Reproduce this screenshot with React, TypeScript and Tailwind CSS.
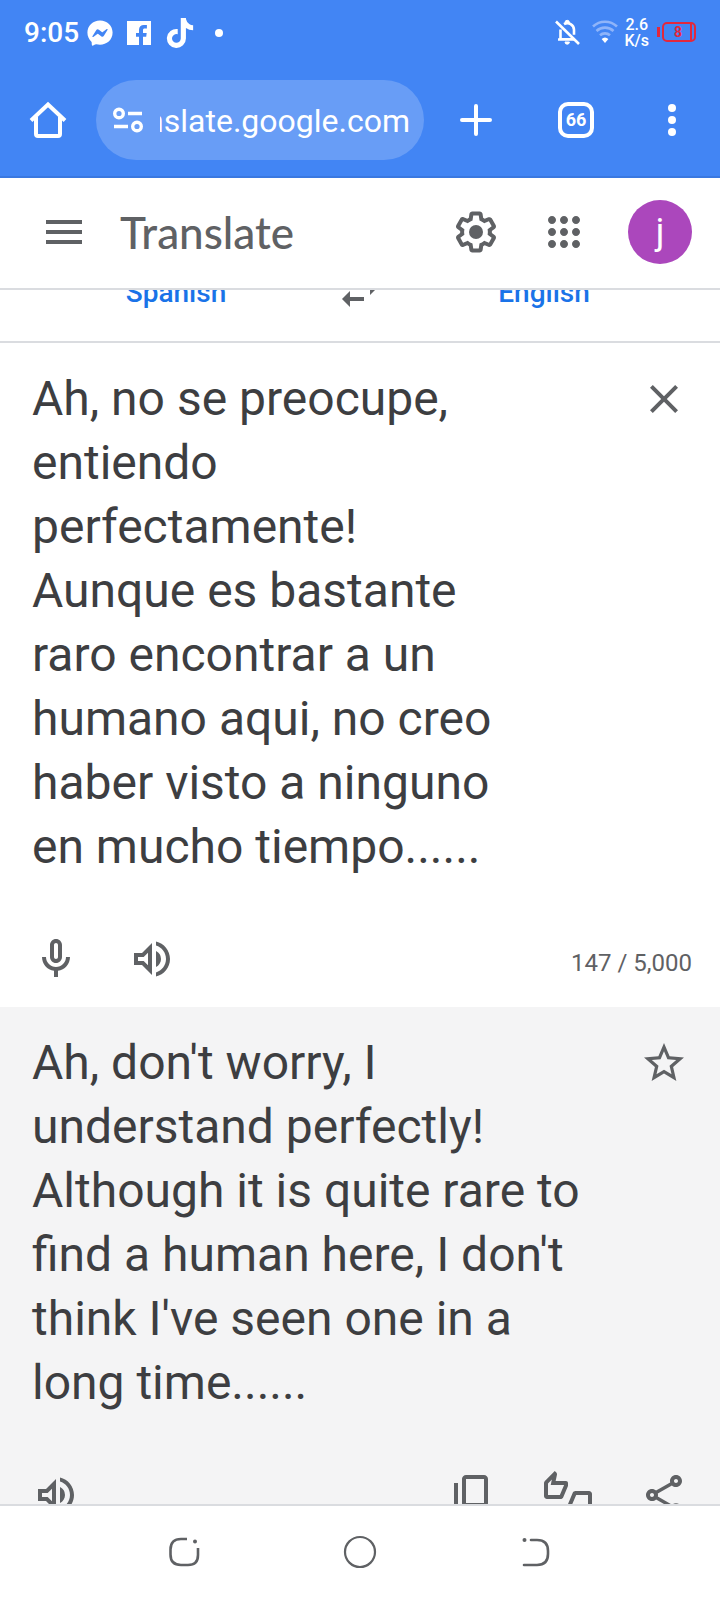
import React, { useState } from "react"
import { FaFacebookMessenger, FaTiktok } from "react-icons/fa6"

type IconProps = {
    d: string
    children?: React.ReactNode
}

type IconButtonProps = IconProps & {
    label: string
}

const PATHS = {
    menu: "M3 18h18v-2H3v2zm0-5h18v-2H3v2zm0-7v2h18V6H3z",
    settings:
        "M13.85 22.25h-3.7c-.74 0-1.36-.54-1.45-1.27l-.27-1.89c-.27-.14-.53-.29-.79-.46l-1.8.72c-.7.26-1.47-.03-1.81-.65L2.2 15.53c-.35-.66-.2-1.44.36-1.88l1.53-1.19c-.01-.15-.02-.3-.02-.46 0-.15.01-.31.02-.46l-1.52-1.19c-.59-.45-.74-1.26-.37-1.88l1.85-3.19c.34-.62 1.11-.9 1.79-.63l1.81.73c.26-.17.52-.32.78-.46l.27-1.91c.09-.7.71-1.25 1.44-1.25h3.7c.74 0 1.36.54 1.45 1.27l.27 1.89c.27.14.53.29.79.46l1.8-.72c.71-.26 1.48.03 1.82.65l1.84 3.18c.36.66.2 1.44-.36 1.88l-1.52 1.19c.01.15.02.3.02.46s-.01.31-.02.46l1.52 1.19c.56.45.72 1.23.37 1.86l-1.86 3.22c-.34.62-1.11.9-1.8.63l-1.8-.72c-.26.17-.52.32-.78.46l-.27 1.91c-.1.68-.72 1.22-1.46 1.22zm-3.23-2h2.76l.37-2.55.53-.22c.44-.18.88-.44 1.34-.78l.45-.34 2.38.96 1.38-2.4-2.03-1.58.07-.56c.03-.26.06-.51.06-.78s-.03-.53-.06-.78l-.07-.56 2.03-1.58-1.39-2.4-2.39.96-.45-.35c-.42-.32-.87-.58-1.33-.77l-.52-.22-.37-2.55h-2.76l-.37 2.55-.53.21c-.44.19-.88.44-1.34.79l-.45.33-2.38-.95-1.39 2.39 2.03 1.58-.07.56a7 7 0 0 0-.06.79c0 .26.02.53.06.78l.07.56-2.03 1.58 1.38 2.4 2.39-.96.45.35c.43.33.86.58 1.33.77l.53.22.38 2.55z",
    apps: "M6 8c1.1 0 2-.9 2-2s-.9-2-2-2-2 .9-2 2 .9 2 2 2zm6 12c1.1 0 2-.9 2-2s-.9-2-2-2-2 .9-2 2 .9 2 2 2zm-6 0c1.1 0 2-.9 2-2s-.9-2-2-2-2 .9-2 2 .9 2 2 2zm0-6c1.1 0 2-.9 2-2s-.9-2-2-2-2 .9-2 2 .9 2 2 2zm6 0c1.1 0 2-.9 2-2s-.9-2-2-2-2 .9-2 2 .9 2 2 2zm4-8c0 1.1.9 2 2 2s2-.9 2-2-.9-2-2-2-2 .9-2 2zm-4 2c1.1 0 2-.9 2-2s-.9-2-2-2-2 .9-2 2 .9 2 2 2zm6 6c1.1 0 2-.9 2-2s-.9-2-2-2-2 .9-2 2 .9 2 2 2zm0 6c1.1 0 2-.9 2-2s-.9-2-2-2-2 .9-2 2 .9 2 2 2z",
    swap: "M6.99 11L3 15l3.99 4v-3H14v-2H6.99v-3zM21 9l-3.99-4v3H10v2h7.01v3L21 9z",
    close: "M19 6.41L17.59 5 12 10.59 6.41 5 5 6.41 10.59 12 5 17.59 6.41 19 12 13.41 17.59 19 19 17.59 13.41 12 19 6.41z",
    mic: "M12 14c1.66 0 3-1.34 3-3V5c0-1.66-1.34-3-3-3S9 3.34 9 5v6c0 1.66 1.34 3 3 3zm-1-9c0-.55.45-1 1-1s1 .45 1 1v6c0 .55-.45 1-1 1s-1-.45-1-1V5zm6 6c0 2.76-2.24 5-5 5s-5-2.24-5-5H5c0 3.53 2.61 6.43 6 6.92V21h2v-3.08c3.39-.49 6-3.39 6-6.92h-2z",
    volume: "M3 9v6h4l5 5V4L7 9H3zm7-.17v6.34L7.83 13H5v-2h2.83L10 8.83zM16.5 12A4.5 4.5 0 0 0 14 7.97v8.05c1.48-.73 2.5-2.25 2.5-4.02zM14 3.23v2.06c2.89.86 5 3.54 5 6.71s-2.11 5.85-5 6.71v2.06c4.01-.91 7-4.49 7-8.77s-2.99-7.86-7-8.77z",
    star: "M22 9.24l-7.19-.62L12 2 9.19 8.63 2 9.24l5.46 4.73L5.82 21 12 17.27 18.18 21l-1.63-7.03L22 9.24zM12 15.4l-3.76 2.27 1-4.28-3.32-2.88 4.38-.38L12 6.1l1.71 4.04 4.38.38-3.32 2.88 1 4.28L12 15.4z",
    copy: "M9 18q-.825 0-1.412-.587T7 16V4q0-.825.588-1.412T9 2h9q.825 0 1.413.588T20 4v12q0 .825-.587 1.413T18 18zm0-2h9V4H9zm-4 6q-.825 0-1.412-.587T3 20V6h2v14h11v2z",
    rate: "M12 6c0-.55-.45-1-1-1H5.82l.66-3.18.02-.23c0-.31-.13-.59-.33-.8L5.38 0 .44 4.94C.17 5.21 0 5.59 0 6v6.5c0 .83.67 1.5 1.5 1.5h6.75c.62 0 1.15-.38 1.38-.91l2.26-5.29c.07-.17.11-.36.11-.55V6zm-2 1.13L7.92 12H2V6.21l1.93-1.93L3.36 7H10v.13zM22.5 10h-6.75c-.62 0-1.15.38-1.38.91l-2.26 5.29c-.07.17-.11.36-.11.55V18c0 .55.45 1 1 1h5.18l-.66 3.18-.02.24c0 .31.13.59.33.8l.79.78 4.94-4.94c.27-.27.44-.65.44-1.06v-6.5c0-.83-.67-1.5-1.5-1.5zm-.5 7.79l-1.93 1.93.57-2.72H14v-.13L16.08 12H22v5.79z",
    share: "M18 16.08c-.76 0-1.44.3-1.96.77L8.91 12.7c.05-.23.09-.46.09-.7s-.04-.47-.09-.7l7.05-4.11c.54.5 1.25.81 2.04.81 1.66 0 3-1.34 3-3s-1.34-3-3-3-3 1.34-3 3c0 .24.04.47.09.7L8.04 9.81C7.5 9.31 6.79 9 6 9c-1.66 0-3 1.34-3 3s1.34 3 3 3c.79 0 1.5-.31 2.04-.81l7.12 4.16c-.05.21-.08.43-.08.65 0 1.61 1.31 2.92 2.92 2.92s2.92-1.31 2.92-2.92-1.31-2.92-2.92-2.92zM18 4c.55 0 1 .45 1 1s-.45 1-1 1-1-.45-1-1 .45-1 1-1zM6 13c-.55 0-1-.45-1-1s.45-1 1-1 1 .45 1 1-.45 1-1 1zm12 7.02c-.55 0-1-.45-1-1s.45-1 1-1 1 .45 1 1-.45 1-1 1z",
}

const SOURCE_TEXT =
    "Ah, no se preocupe, entiendo perfectamente!\nAunque es bastante raro encontrar a un humano aqui, no creo haber visto a ninguno en mucho tiempo......"
const RESULT_TEXT =
    "Ah, don't worry, I understand perfectly! Although it is quite rare to find a human here, I don't think I've seen one in a long time......"

const Icon: React.FC<IconProps> = ({ d, children }) => (
    <svg viewBox="0 0 24 24" className="size-12 shrink-0" fill="currentColor" aria-hidden="true">
        <path d={d} />
        {children}
    </svg>
)

const IconButton: React.FC<IconButtonProps> = ({ label, d, children }) => (
    <button type="button" aria-label={label} className="shrink-0 text-[#5f6164]">
        <Icon d={d}>{children}</Icon>
    </button>
)

const StatusBar: React.FC = () => (
    <div className="flex h-16 items-center justify-between pr-6 pl-6 text-white">
        <div className="flex items-center pt-0.5">
            <span className="text-[28px] font-medium">9:05</span>
            <FaFacebookMessenger className="ml-2 size-[26px]" />
            <svg viewBox="0 0 24 24" className="ml-3.5 size-6" aria-hidden="true">
                <path
                    fill="currentColor"
                    fillRule="evenodd"
                    d="M0 0h24v24h-8v-8.2h3.2l.5-3.8H16V9.2c0-1.2.4-1.8 1.9-1.8h2V4.1a22 22 0 0 0-3-.2c-3 0-4.9 1.7-4.9 4.9V12H9v3.8h3V24H0z"
                />
            </svg>
            <FaTiktok className="ml-3.5 size-[30px]" />
            <span className="ml-5 size-2 rounded-full bg-white" />
        </div>
        <div className="flex items-center">
            <svg viewBox="0 0 26 28" className="h-7 w-[26px]" fill="none" stroke="currentColor" strokeWidth="2.6" aria-hidden="true">
                <path d="M2 3.5L25 26" />
                <path d="M10 6.2a6.6 6.6 0 0 1 10 5.6v5M6.5 11.5v9.8h13M4 21.5h16" />
                <path d="M11 4.5a2.2 2.2 0 0 1 4.4 0zM11 24h4.4a2.2 2.2 0 0 1-4.4 0z" fill="currentColor" strokeWidth="1" />
            </svg>
            <svg viewBox="0 0 26 24" className="ml-3 h-6 w-[26px]" fill="none" stroke="#8fb4f9" strokeWidth="2.6" aria-hidden="true">
                <path d="M1 6.5a17.5 17.5 0 0 1 24 0" />
                <path d="M4.5 11a12.5 12.5 0 0 1 17 0" />
                <path d="M8 15.3a7.5 7.5 0 0 1 10 0" />
                <path d="M13 23l-3.4-4a5 5 0 0 1 6.8 0z" fill="#fff" stroke="none" />
            </svg>
            <div className="ml-1.5 pt-0.5 text-center text-base leading-4 font-medium">
                <div>2.6</div>
                <div>K/s</div>
            </div>
            <div className="ml-2 flex items-center">
                <span className="h-2.5 w-[3px] bg-[#e3283c]" />
                <span className="ml-0.5 flex h-5 w-[34px] items-center justify-end rounded-[5px] border-2 border-[#e3283c]">
                    <span className="mr-2 text-sm leading-4 font-bold text-[#e3283c]">8</span>
                    <span className="mr-0.5 h-full w-0.5 bg-[#e3283c]" />
                </span>
            </div>
        </div>
    </div>
)

const BrowserBar: React.FC = () => (
    <div className="flex h-28 items-center text-white">
        <button type="button" aria-label="Home" className="flex w-24 justify-center">
            <svg viewBox="0 0 40 40" className="size-10" fill="none" stroke="currentColor" strokeWidth="4" aria-hidden="true">
                <path d="M3 20.5L20 4.5l17 16" />
                <path d="M8 17v17q0 2 2 2h20q2 0 2-2V17" />
            </svg>
        </button>
        <div className="flex h-20 min-w-0 flex-1 items-center gap-4 rounded-full bg-[#689df6] pr-3.5 pl-4">
            <svg viewBox="0 0 32 28" className="h-7 w-8 shrink-0" fill="none" stroke="currentColor" strokeWidth="3.4" aria-hidden="true">
                <circle cx="7" cy="7.5" r="4.3" />
                <path d="M16 7.5h14M2 20.5h14" />
                <circle cx="25" cy="20.5" r="4.3" />
            </svg>
            {/* rtl keeps the end of the host name in view */}
            <input
                type="text"
                dir="rtl"
                aria-label="Address"
                defaultValue="translate.google.com"
                className="w-full min-w-0 flex-1 bg-transparent pt-0.5 text-[32px] leading-10 outline-none"
            />
        </div>
        <button type="button" aria-label="New tab" className="flex w-26 justify-center">
            <svg viewBox="0 0 32 32" className="size-8" stroke="currentColor" strokeWidth="4" strokeLinecap="round" aria-hidden="true">
                <path d="M16 2v28M2 16h28" />
            </svg>
        </button>
        <button type="button" aria-label="Tabs" className="flex w-24 justify-center">
            <span className="flex size-9 items-center justify-center rounded-[10px] border-4 border-white text-lg font-bold">66</span>
        </button>
        <button type="button" aria-label="More options" className="flex w-24 flex-col items-center gap-1">
            <span className="size-2 rounded-full bg-white" />
            <span className="size-2 rounded-full bg-white" />
            <span className="size-2 rounded-full bg-white" />
        </button>
    </div>
)

const PageHeader: React.FC = () => (
    <header className="flex h-28 shrink-0 items-center border-b-2 border-[#dadce0] bg-white pr-7 pb-0.5 pl-10">
        <IconButton label="Main menu" d={PATHS.menu} />
        <h1 className="ml-8 flex-1 font-[Lato,Roboto,sans-serif] text-[44px] leading-none font-medium text-[#5f6164]">Translate</h1>
        <div className="flex items-center gap-10">
            <IconButton label="Settings" d={PATHS.settings}>
                <circle cx="12" cy="12" r="3.5" />
            </IconButton>
            <IconButton label="Google apps" d={PATHS.apps} />
            <button type="button" aria-label="Account" className="size-16 rounded-full bg-[#ab47bc] text-4xl text-white">
                j
            </button>
        </div>
    </header>
)

/* scrolled halfway under the page header */
const LanguageBar: React.FC = () => (
    <div className="flex h-[53px] shrink-0 items-end overflow-hidden border-b-2 border-[#dadce0]">
        <div className="flex h-24 flex-1 shrink-0 items-center text-[28px] font-medium text-[#1a73e8]">
            <button type="button" className="flex-1">
                Spanish
            </button>
            <button type="button" aria-label="Swap languages" className="flex w-4 justify-center text-[#5f6164]">
                <Icon d={PATHS.swap} />
            </button>
            <button type="button" className="flex-1">
                English
            </button>
        </div>
    </div>
)

const SourcePanel: React.FC = () => {
    const [text, setText] = useState(SOURCE_TEXT)
    return (
        <section className="shrink-0 pt-6 pb-6">
            <div className="flex items-start justify-between pr-8 pl-8">
                <textarea
                    aria-label="Source text"
                    rows={8}
                    spellCheck={false}
                    value={text}
                    onChange={(e) => setText(e.target.value)}
                    className="block min-w-0 flex-1 resize-none overflow-hidden pr-24 text-5xl leading-16 text-[#3d3e41] outline-none"
                />
                <div className="flex h-16 items-center">
                    <button type="button" aria-label="Clear source text" onClick={() => setText("")} className="text-[#5f6164]">
                        <Icon d={PATHS.close} />
                    </button>
                </div>
            </div>
            <div className="mt-14 flex items-center gap-12 pr-7 pl-8">
                <IconButton label="Translate by voice" d={PATHS.mic} />
                <IconButton label="Listen to source text" d={PATHS.volume} />
                <span className="flex-1 pt-2 text-right text-2xl text-[#5f6164]">147 / 5,000</span>
            </div>
        </section>
    )
}

const ResultPanel: React.FC = () => (
    <section className="shrink-0 bg-[#f4f4f5] pt-6 pb-6">
        <div className="flex items-start justify-between pr-8 pl-8">
            <p className="min-w-0 flex-1 pr-8 text-5xl leading-16 text-[#3d3e41]">{RESULT_TEXT}</p>
            <div className="flex h-16 items-center">
                <IconButton label="Save translation" d={PATHS.star} />
            </div>
        </div>
        <div className="mt-14 flex items-center gap-12 pr-8 pl-8">
            <IconButton label="Listen to translation" d={PATHS.volume} />
            <div className="flex flex-1 justify-end gap-12">
                <IconButton label="Copy translation" d={PATHS.copy} />
                <IconButton label="Rate translation" d={PATHS.rate} />
                <IconButton label="Share translation" d={PATHS.share} />
            </div>
        </div>
    </section>
)

const NavigationBar: React.FC = () => (
    <nav className="flex h-24 shrink-0 items-center justify-center gap-34 border-t-2 border-[#dadce0] bg-white pb-0.5 text-[#5f6164]">
        <button type="button" aria-label="Recent apps">
            <svg viewBox="0 0 40 40" className="size-10" fill="none" stroke="currentColor" strokeWidth="2.6" aria-hidden="true">
                <path d="M23 7h-6Q6.500 7 6.500 17.500v5Q6.500 33 17 33h7q10 0 10-10v-7" />
                <circle cx="31" cy="9.5" r="2" fill="currentColor" stroke="none" />
            </svg>
        </button>
        <button type="button" aria-label="Home screen">
            <svg viewBox="0 0 40 40" className="size-10" fill="none" stroke="currentColor" strokeWidth="2.2" aria-hidden="true">
                <circle cx="20" cy="20" r="15" />
            </svg>
        </button>
        <button type="button" aria-label="Back">
            <svg viewBox="0 0 40 40" className="size-10" fill="none" stroke="currentColor" strokeWidth="2.6" strokeLinecap="round" aria-hidden="true">
                <path d="M15 8h6q11 0 11 11v3q0 11-11 11H8" />
                <circle cx="8.5" cy="8" r="2" fill="currentColor" stroke="none" />
            </svg>
        </button>
    </nav>
)

const App: React.FC = () => {
    return (
        <div className="flex h-screen flex-col bg-white font-[Roboto,sans-serif]">
            <div className="shrink-0 border-b-2 border-[#3a78e0] bg-[#4285f4]">
                <StatusBar />
                <BrowserBar />
            </div>
            <PageHeader />
            <main className="flex min-h-0 flex-1 flex-col overflow-hidden">
                <LanguageBar />
                <SourcePanel />
                <ResultPanel />
            </main>
            <NavigationBar />
        </div>
    )
}
export default App
